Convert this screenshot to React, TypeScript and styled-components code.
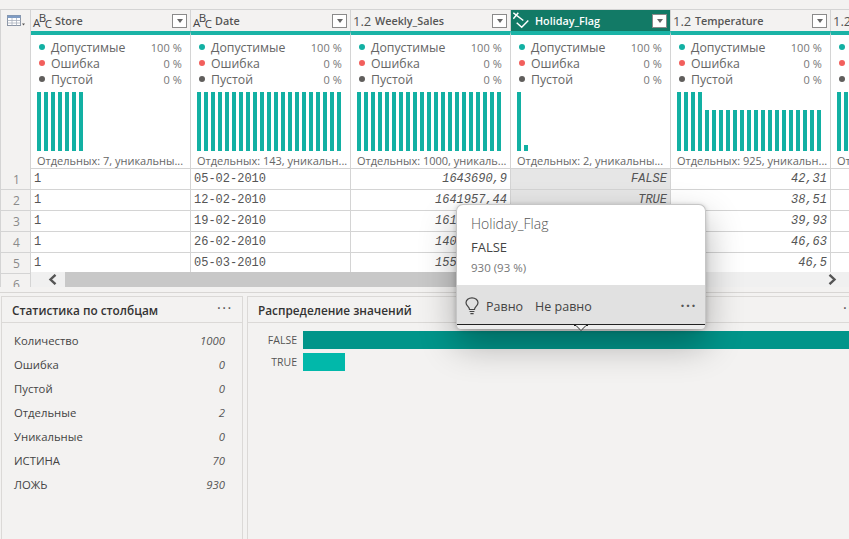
import React from 'react';
import styled, { createGlobalStyle } from 'styled-components';

const UI_FONT = `'Open Sans', 'Noto Sans', sans-serif`;
const COLUMNS_TEMPLATE = '31px repeat(6, 160px)';

const GlobalStyle = createGlobalStyle`
    html, body {
        margin: 0;
        padding: 0;
        background: #f3f2f1;
        font-family: ${UI_FONT};
    }
`;

const Page = styled.div`
    position: relative;
    display: flex;
    flex-direction: column;
    width: 849px;
    height: 539px;
    padding-top: 9px;
    box-sizing: border-box;
    overflow: hidden;
    background: #f3f2f1;
`;

const TableArea = styled.div`
    position: relative;
    flex: none;
    height: 278px;
    overflow: hidden;
    border-top: 1px solid #d4d4d4;
    box-sizing: border-box;
`;

const HeaderRow = styled.div`
    display: grid;
    grid-template-columns: ${COLUMNS_TEMPLATE};
    grid-template-rows: 21px;
    height: 21px;
`;

const Corner = styled.div`
    display: flex;
    align-items: center;
    padding-left: 6px;
    box-sizing: border-box;
    border-left: 1px solid #d4d4d4;
    border-right: 1px solid #d4d4d4;
`;

const HeaderCell = styled.div<{ $selected?: boolean }>`
    display: flex;
    align-items: center;
    min-height: 0;
    padding: 0 3px 0 2px;
    box-sizing: border-box;
    border-right: 1px solid #d4d4d4;
    background: ${p => (p.$selected ? '#127a66' : '#f3f2f1')};
    color: ${p => (p.$selected ? '#fff' : '#555')};
`;

const TypeIcon = styled.span`
    flex: none;
    display: flex;
    align-items: center;
    width: 22px;
    height: 20px;
    font-size: 13px;
    color: inherit;
`;

const Abc = styled.span`
    flex: none;
    display: flex;
    align-items: center;
    width: 22px;
    height: 20px;
    white-space: nowrap;
    color: #444;
`;

const AbcLetter = styled.span<{ $lift: number }>`
    margin-right: -1.5px;
    font-size: 11.5px;
    line-height: 12px;
    transform: translateY(${p => -p.$lift}px);
`;

const ColumnName = styled.span`
    flex: 1;
    font-size: 10.8px;
    font-weight: 600;
    white-space: nowrap;
    color: inherit;
`;

const FilterButton = styled.span`
    flex: none;
    display: flex;
    align-items: center;
    justify-content: center;
    width: 15px;
    height: 14px;
    margin-top: 1px;
    background: #fff;
    border: 1px solid #8a8a8a;
    box-sizing: border-box;

    &::after {
        content: '';
        border-left: 3.5px solid transparent;
        border-right: 3.5px solid transparent;
        border-top: 4px solid #666;
    }
`;

const ProfileRow = styled.div`
    display: grid;
    grid-template-columns: ${COLUMNS_TEMPLATE};
    height: 138px;
    border-bottom: 1px solid #d4d4d4;
    box-sizing: border-box;
    background: #fff;
`;

const NumberCell = styled.div`
    display: flex;
    align-items: center;
    justify-content: center;
    box-sizing: border-box;
    padding-left: 2px;
    background: #f3f2f1;
    border-left: 1px solid #d4d4d4;
    border-right: 1px solid #d4d4d4;
    font-size: 12px;
    color: #8a8a8a;
`;

const ProfileCell = styled.div`
    display: flex;
    flex-direction: column;
    min-width: 0;
    padding: 4px 8px 0 6px;
    box-sizing: border-box;
    border-top: 4px solid #1ab3a6;
    border-right: 1px solid #d4d4d4;
`;

const QualityLine = styled.div`
    display: flex;
    align-items: center;
    height: 16px;
    padding-left: 2px;
    font-size: 12.3px;
    color: #666;
`;

const Dot = styled.span<{ $color: string }>`
    flex: none;
    width: 6px;
    height: 6px;
    margin-right: 6px;
    border-radius: 50%;
    background: ${p => p.$color};
`;

const QualityLabel = styled.span`
    flex: 1;
`;

const QualityValue = styled.span`
    font-size: 11px;
    letter-spacing: 0.1px;
    color: #777;
`;

const Bars = styled.div`
    display: flex;
    align-items: flex-end;
    gap: 3px;
    height: 59px;
    margin-top: 5px;
`;

const Bar = styled.span<{ $height: number }>`
    flex: none;
    width: 4px;
    height: ${p => p.$height}px;
    background: #12b0a3;
`;

const DistinctText = styled.div`
    margin-top: 1px;
    font-size: 11px;
    line-height: 18px;
    white-space: nowrap;
    color: #666;
`;

const DataRow = styled.div`
    display: grid;
    grid-template-columns: ${COLUMNS_TEMPLATE};
    height: 21px;
    border-bottom: 1px solid #d4d4d4;
    box-sizing: border-box;
    background: #fff;
`;

const DataCell = styled.div<{ $right?: boolean; $selected?: boolean }>`
    padding: 0 3px;
    box-sizing: border-box;
    border-right: 1px solid #d4d4d4;
    font-family: 'Liberation Mono', monospace;
    font-size: 12px;
    line-height: 20px;
    white-space: nowrap;
    color: #555;
    text-align: ${p => (p.$right ? 'right' : 'left')};
    font-style: ${p => (p.$right ? 'italic' : 'normal')};
    background: ${p => (p.$selected ? '#e6e6e6' : '#fff')};
`;

const ScrollBar = styled.div`
    position: absolute;
    left: 31px;
    right: 0;
    bottom: 0;
    display: flex;
    align-items: center;
    height: 15px;
    background: #f0f0f0;
`;

const ScrollArrow = styled.span`
    flex: none;
    display: flex;
    align-items: center;
    justify-content: center;
    width: 34px;
    height: 15px;
    box-sizing: border-box;
`;

const LeftArrow = styled(ScrollArrow)`
    padding-left: 8px;
`;

const ScrollThumb = styled.span`
    flex: none;
    width: 420px;
    height: 15px;
    background: #c8c8c8;
`;

const ScrollSpacer = styled.span`
    flex: 1;
`;

const Divider = styled.div`
    flex: none;
    height: 1px;
    margin-top: 5px;
    background: #d8d6d4;
`;

const BottomArea = styled.div`
    flex: 1;
    display: grid;
    grid-template-columns: 242px 622px;
    gap: 4px;
    min-height: 0;
    margin-top: 3px;
    padding-left: 1px;
`;

const Panel = styled.section`
    display: flex;
    flex-direction: column;
    min-width: 0;
    box-sizing: border-box;
    border: 1px solid #dbd9d7;
    border-bottom: 0;
`;

const PanelHeader = styled.header`
    flex: none;
    display: flex;
    align-items: center;
    justify-content: space-between;
    height: 26px;
    padding: 1px 9px 0 10px;
    box-sizing: border-box;
    border-bottom: 1px solid #dbd9d7;
    font-size: 11.8px;
    font-weight: 600;
    color: #333;
`;

const PanelDots = styled.span`
    margin-top: -3px;
    font-size: 12px;
    letter-spacing: 2px;
    color: #555;
`;

const StatsList = styled.div`
    display: flex;
    flex-direction: column;
    padding: 5px 17px 0 12px;
`;

const StatRow = styled.div`
    display: flex;
    align-items: center;
    justify-content: space-between;
    height: 24px;
    font-size: 11.3px;
    color: #444;

    em {
        color: #555;
    }
`;

const Distribution = styled.div`
    display: flex;
    flex-direction: column;
    gap: 4px;
    padding-top: 8px;
`;

const DistRow = styled.div`
    display: flex;
    align-items: center;
    height: 18px;
    font-size: 10.5px;
    color: #555;
`;

const DistLabel = styled.span`
    flex: none;
    width: 49px;
    margin-right: 6px;
    text-align: right;
`;

const DistBar = styled.span<{ $color: string }>`
    flex: none;
    height: 18px;
    background: ${p => p.$color};
`;

const Tooltip = styled.div`
    position: absolute;
    left: 456px;
    top: 204px;
    display: flex;
    flex-direction: column;
    width: 250px;
    height: 125px;
    box-sizing: border-box;
    border: 1px solid #c6c6c6;
    border-bottom: 0;
    border-radius: 7px;
    background: #fff;
    box-shadow: 0 16px 36px rgba(0, 0, 0, 0.3), 0 1px 5px rgba(0, 0, 0, 0.22);
`;

const TooltipBody = styled.div`
    flex: none;
    height: 80px;
    padding: 9px 14px 0;
    box-sizing: border-box;
`;

const TooltipTitle = styled.div`
    font-size: 14px;
    font-weight: 300;
    line-height: 20px;
    color: #555;
`;

const TooltipValue = styled.div`
    margin-top: 3px;
    font-size: 13px;
    line-height: 20px;
    color: #444;
`;

const TooltipCount = styled.div`
    margin-top: 1px;
    font-size: 11.5px;
    line-height: 20px;
    color: #777;
`;

const TooltipActions = styled.div`
    flex: none;
    display: flex;
    align-items: center;
    height: 40px;
    padding: 3px 8px 0 8px;
    background: #e1e1e1;
    border-bottom: 1px solid #222;
    box-sizing: border-box;
    font-size: 12.5px;
    color: #444;
`;

const ActionLink = styled.span`
    margin-left: 12px;

    &:first-of-type {
        margin-left: 7px;
    }
`;

const ActionDots = styled.span`
    margin-left: auto;
    font-size: 14px;
    font-weight: 700;
    letter-spacing: 1.5px;
    line-height: 14px;
    color: #555;
`;

const TooltipBase = styled.div`
    flex: 1;
    border-radius: 0 0 7px 7px;
    background: #ededed;
`;

const TooltipNotch = styled.svg`
    position: absolute;
    left: 117px;
    bottom: -2px;
`;

const TableIcon = () => (
    <svg width="18" height="12" viewBox="0 0 18 12">
        <rect x="0.5" y="0.5" width="13" height="10" fill="#fff" stroke="#8b95a5" />
        <rect x="0.5" y="0.5" width="13" height="2.5" fill="#7f9cc4" />
        <path d="M0.5 5.5H13.5M0.5 8H13.5M5 3V10.5M9.5 3V10.5" stroke="#a8b0bc" strokeWidth="0.8" />
        <path d="M15 8.5H18L16.5 10.5Z" fill="#555" />
    </svg>
);

const LogicalIcon = () => (
    <svg width="20" height="18" viewBox="0 0 20 18" fill="none" stroke="#fff" strokeWidth="1.5">
        <path d="M0.3 0.8L10.3 8.5M5.3 0.8L0.3 6.8" />
        <path d="M3.7 10.8L8.7 15.2L15.3 8.5" />
    </svg>
);

const BulbIcon = () => (
    <svg width="14" height="18" viewBox="0 0 14 18" fill="none" stroke="#444" strokeWidth="1.2">
        <path d="M4.5 12.5C4.5 10 1 8.8 1 5.8C1 3 3.6 0.8 7 0.8C10.4 0.8 13 3 13 5.8C13 8.8 9.5 10 9.5 12.5Z" />
        <path d="M4.6 14.5H9.4M5.4 16.6H8.6" />
    </svg>
);

const ChevronLeft = () => (
    <svg width="9" height="11" viewBox="0 0 9 11">
        <path d="M7.5 0.8L2.5 5.5L7.5 10.2" fill="none" stroke="#555" strokeWidth="2.4" />
    </svg>
);

const ChevronRight = () => (
    <svg width="9" height="11" viewBox="0 0 9 11">
        <path d="M1.5 0.8L6.5 5.5L1.5 10.2" fill="none" stroke="#555" strokeWidth="2.4" />
    </svg>
);

type ColumnKind = 'text' | 'number' | 'logical';

interface Column {
    name: string;
    kind: ColumnKind;
    distinct: string;
    bars: number[];
    selected?: boolean;
}

const full = (count: number) => Array.from({ length: count }, () => 59);

const COLUMNS: Column[] = [
    { name: 'Store', kind: 'text', distinct: 'Отдельных: 7, уникальны...', bars: full(7) },
    { name: 'Date', kind: 'text', distinct: 'Отдельных: 143, уникальн...', bars: full(21) },
    { name: 'Weekly_Sales', kind: 'number', distinct: 'Отдельных: 1000, уникаль...', bars: full(21) },
    { name: 'Holiday_Flag', kind: 'logical', distinct: 'Отдельных: 2, уникальны...', bars: [59, 6], selected: true },
    {
        name: 'Temperature',
        kind: 'number',
        distinct: 'Отдельных: 925, уникальн...',
        bars: [...full(4), ...Array.from({ length: 17 }, () => 41)],
    },
    { name: 'Fuel_Price', kind: 'number', distinct: 'Отдельных: 892, уникальн...', bars: full(21) },
];

const ROWS = [
    ['1', '05-02-2010', '1643690,9', 'FALSE', '42,31', ''],
    ['1', '12-02-2010', '1641957,44', 'TRUE', '38,51', ''],
    ['1', '19-02-2010', '1611968,17', 'FALSE', '39,93', ''],
    ['1', '26-02-2010', '1409727,59', 'FALSE', '46,63', ''],
    ['1', '05-03-2010', '1554806,68', 'FALSE', '46,5', ''],
    ['1', '12-03-2010', '1439541,59', 'FALSE', '57,79', ''],
];

const QUALITY = [
    { label: 'Допустимые', value: '100 %', color: '#12b0a3' },
    { label: 'Ошибка', value: '0 %', color: '#f25f5c' },
    { label: 'Пустой', value: '0 %', color: '#605e5c' },
];

const STATS = [
    ['Количество', '1000'],
    ['Ошибка', '0'],
    ['Пустой', '0'],
    ['Отдельные', '2'],
    ['Уникальные', '0'],
    ['ИСТИНА', '70'],
    ['ЛОЖЬ', '930'],
];

const ColumnType: React.FC<{ kind: ColumnKind }> = ({ kind }) => {
    if (kind === 'text') {
        return (
            <Abc>
                <AbcLetter $lift={-2}>A</AbcLetter>
                <AbcLetter $lift={3}>B</AbcLetter>
                <AbcLetter $lift={-3}>C</AbcLetter>
            </Abc>
        );
    }
    if (kind === 'logical') {
        return (
            <TypeIcon>
                <LogicalIcon />
            </TypeIcon>
        );
    }
    return <TypeIcon>1.2</TypeIcon>;
};

export default function App() {
    return (
        <Page>
            <GlobalStyle />
            <TableArea>
                <HeaderRow>
                    <Corner>
                        <TableIcon />
                    </Corner>
                    {COLUMNS.map(column => (
                        <HeaderCell key={column.name} $selected={column.selected}>
                            <ColumnType kind={column.kind} />
                            <ColumnName>{column.name}</ColumnName>
                            <FilterButton />
                        </HeaderCell>
                    ))}
                </HeaderRow>
                <ProfileRow>
                    <NumberCell />
                    {COLUMNS.map(column => (
                        <ProfileCell key={column.name}>
                            {QUALITY.map(item => (
                                <QualityLine key={item.label}>
                                    <Dot $color={item.color} />
                                    <QualityLabel>{item.label}</QualityLabel>
                                    <QualityValue>{item.value}</QualityValue>
                                </QualityLine>
                            ))}
                            <Bars>
                                {column.bars.map((height, i) => (
                                    <Bar key={i} $height={height} />
                                ))}
                            </Bars>
                            <DistinctText>{column.distinct}</DistinctText>
                        </ProfileCell>
                    ))}
                </ProfileRow>
                {ROWS.map((row, rowIndex) => (
                    <DataRow key={rowIndex}>
                        <NumberCell>{rowIndex + 1}</NumberCell>
                        {row.map((value, i) => (
                            <DataCell key={i} $right={i > 1} $selected={i === 3}>
                                {value}
                            </DataCell>
                        ))}
                    </DataRow>
                ))}
                <ScrollBar>
                    <LeftArrow>
                        <ChevronLeft />
                    </LeftArrow>
                    <ScrollThumb />
                    <ScrollSpacer />
                    <ScrollArrow>
                        <ChevronRight />
                    </ScrollArrow>
                </ScrollBar>
            </TableArea>
            <Divider />
            <BottomArea>
                <Panel>
                    <PanelHeader>
                        Статистика по столбцам
                        <PanelDots>···</PanelDots>
                    </PanelHeader>
                    <StatsList>
                        {STATS.map(([label, value]) => (
                            <StatRow key={label}>
                                {label}
                                <em>{value}</em>
                            </StatRow>
                        ))}
                    </StatsList>
                </Panel>
                <Panel>
                    <PanelHeader>
                        Распределение значений
                        <PanelDots>···</PanelDots>
                    </PanelHeader>
                    <Distribution>
                        <DistRow>
                            <DistLabel>FALSE</DistLabel>
                            <DistBar $color="#01958a" style={{ width: 566 }} />
                        </DistRow>
                        <DistRow>
                            <DistLabel>TRUE</DistLabel>
                            <DistBar $color="#01b8aa" style={{ width: 42 }} />
                        </DistRow>
                    </Distribution>
                </Panel>
            </BottomArea>
            <Tooltip>
                <TooltipBody>
                    <TooltipTitle>Holiday_Flag</TooltipTitle>
                    <TooltipValue>FALSE</TooltipValue>
                    <TooltipCount>930 (93 %)</TooltipCount>
                </TooltipBody>
                <TooltipActions>
                    <BulbIcon />
                    <ActionLink>Равно</ActionLink>
                    <ActionLink>Не равно</ActionLink>
                    <ActionDots>···</ActionDots>
                </TooltipActions>
                <TooltipBase />
                <TooltipNotch width="14" height="7" viewBox="0 0 14 7">
                    <path d="M0 1.5H2L7 6.5L12 1.5H14" fill="#f6f6f6" stroke="#222" />
                </TooltipNotch>
            </Tooltip>
        </Page>
    );
}
